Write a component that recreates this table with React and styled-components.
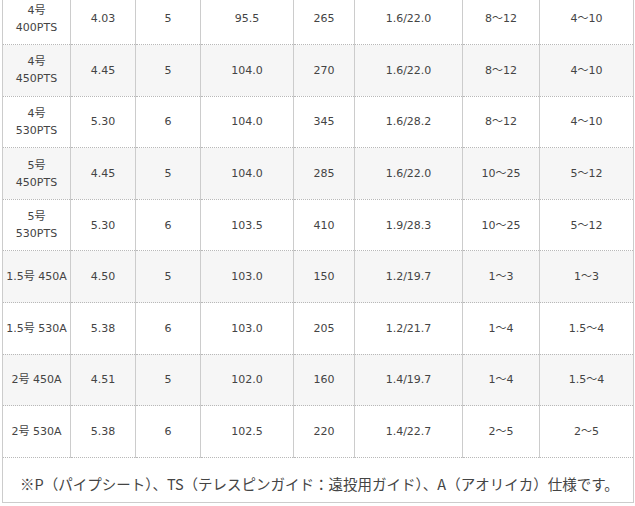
import React from 'react';
import styled, { createGlobalStyle } from 'styled-components';

const GlobalStyle = createGlobalStyle`
    html, body {
        margin: 0;
        padding: 0;
        background: #ffffff;
    }
    body {
        font-family: "DejaVu Sans", "Noto Sans CJK JP", sans-serif;
        color: #444444;
    }
`;

const StyledPage = styled.div`
    width: 635px;
    height: 506px;
    overflow: hidden;
    padding-left: 2px;
    box-sizing: border-box;
`;

const StyledTable = styled.table`
    margin-top: -7px;
    width: 632px;
    border-collapse: collapse;
    table-layout: fixed;
`;

const StyledRow = styled.tr`
    height: 51.6px;
    background: ${props => (props.$alt ? '#f6f6f6' : '#ffffff')};
`;

const StyledCell = styled.td`
    border-left: 1px solid #cccccc;
    border-right: 1px solid #cccccc;
    border-bottom: 1px dotted #b8b8b8;
    padding: 0 2px;
    text-align: center;
    vertical-align: middle;
    font-family: "DejaVu Sans", "Noto Sans CJK JP", sans-serif;
    font-size: 11px;
    line-height: 17px;
    color: #444444;
`;

const StyledNoteRow = styled.tr`
    height: 45px;
    background: #ffffff;
`;

const StyledNote = styled.td`
    border: 1px solid #cccccc;
    border-top: none;
    padding: 9px 0 0 17px;
    font-family: "Noto Sans CJK JP", sans-serif;
    font-size: 14.5px;
    line-height: 20px;
    color: #444444;
    text-align: left;
    vertical-align: middle;
`;

const widths = [68, 65, 65, 93, 61, 108, 77, 94];

const rows = [
    [['4号', '400PTS'], '4.03', '5', '95.5', '265', '1.6/22.0', '8〜12', '4〜10'],
    [['4号', '450PTS'], '4.45', '5', '104.0', '270', '1.6/22.0', '8〜12', '4〜10'],
    [['4号', '530PTS'], '5.30', '6', '104.0', '345', '1.6/28.2', '8〜12', '4〜10'],
    [['5号', '450PTS'], '4.45', '5', '104.0', '285', '1.6/22.0', '10〜25', '5〜12'],
    [['5号', '530PTS'], '5.30', '6', '103.5', '410', '1.9/28.3', '10〜25', '5〜12'],
    ['1.5号 450A', '4.50', '5', '103.0', '150', '1.2/19.7', '1〜3', '1〜3'],
    ['1.5号 530A', '5.38', '6', '103.0', '205', '1.2/21.7', '1〜4', '1.5〜4'],
    ['2号 450A', '4.51', '5', '102.0', '160', '1.4/19.7', '1〜4', '1.5〜4'],
    ['2号 530A', '5.38', '6', '102.5', '220', '1.4/22.7', '2〜5', '2〜5'],
];

const renderValue = (value) => {
    if (Array.isArray(value)) {
        return value.map((line, i) => (
            <React.Fragment key={i}>
                {i > 0 && <br />}
                {line}
            </React.Fragment>
        ));
    }
    return value;
};

export default function App() {
    return (
        <StyledPage>
            <GlobalStyle />
            <StyledTable>
                <colgroup>
                    {widths.map((w, i) => <col key={i} style={{ width: w }} />)}
                </colgroup>
                <tbody>
                    {rows.map((row, r) => (
                        <StyledRow key={r} $alt={r % 2 === 1}>
                            {row.map((value, c) => (
                                <StyledCell key={c}>{renderValue(value)}</StyledCell>
                            ))}
                        </StyledRow>
                    ))}
                    <StyledNoteRow>
                        <StyledNote colSpan={8}>
                            ※P（パイプシート）、TS（テレスピンガイド：遠投用ガイド）、A（アオリイカ）仕様です。
                        </StyledNote>
                    </StyledNoteRow>
                </tbody>
            </StyledTable>
        </StyledPage>
    );
}
